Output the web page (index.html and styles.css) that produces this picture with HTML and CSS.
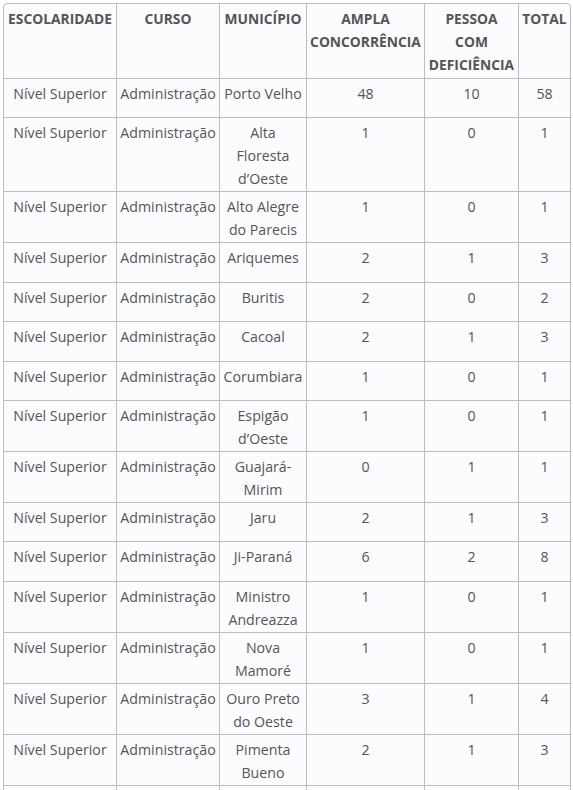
FILE: index.html
```html
<!DOCTYPE html>
<html lang="pt-BR">
<head>
<meta charset="utf-8">
<title>Vagas</title>
<link rel="stylesheet" href="styles.css">
</head>
<body>
<table class="vagas">
  <colgroup>
    <col class="c-esc"><col class="c-cur"><col class="c-mun"><col class="c-amp"><col class="c-pcd"><col class="c-tot">
  </colgroup>
  <thead>
    <tr><th>ESCOLARIDADE</th><th>CURSO</th><th>MUNICÍPIO</th><th>AMPLA CONCORRÊNCIA</th><th>PESSOA COM DEFICIÊNCIA</th><th>TOTAL</th></tr>
  </thead>
  <tbody>
    <tr><td>Nível Superior</td><td>Administração</td><td>Porto Velho</td><td>48</td><td>10</td><td>58</td></tr>
    <tr><td>Nível Superior</td><td>Administração</td><td>Alta Floresta d’Oeste</td><td>1</td><td>0</td><td>1</td></tr>
    <tr><td>Nível Superior</td><td>Administração</td><td>Alto Alegre do Parecis</td><td>1</td><td>0</td><td>1</td></tr>
    <tr><td>Nível Superior</td><td>Administração</td><td>Ariquemes</td><td>2</td><td>1</td><td>3</td></tr>
    <tr><td>Nível Superior</td><td>Administração</td><td>Buritis</td><td>2</td><td>0</td><td>2</td></tr>
    <tr><td>Nível Superior</td><td>Administração</td><td>Cacoal</td><td>2</td><td>1</td><td>3</td></tr>
    <tr><td>Nível Superior</td><td>Administração</td><td>Corumbiara</td><td>1</td><td>0</td><td>1</td></tr>
    <tr><td>Nível Superior</td><td>Administração</td><td>Espigão d’Oeste</td><td>1</td><td>0</td><td>1</td></tr>
    <tr><td>Nível Superior</td><td>Administração</td><td>Guajará-Mirim</td><td>0</td><td>1</td><td>1</td></tr>
    <tr><td>Nível Superior</td><td>Administração</td><td>Jaru</td><td>2</td><td>1</td><td>3</td></tr>
    <tr><td>Nível Superior</td><td>Administração</td><td>Ji-Paraná</td><td>6</td><td>2</td><td>8</td></tr>
    <tr><td>Nível Superior</td><td>Administração</td><td>Ministro Andreazza</td><td>1</td><td>0</td><td>1</td></tr>
    <tr><td>Nível Superior</td><td>Administração</td><td>Nova Mamoré</td><td>1</td><td>0</td><td>1</td></tr>
    <tr><td>Nível Superior</td><td>Administração</td><td>Ouro Preto do Oeste</td><td>3</td><td>1</td><td>4</td></tr>
    <tr><td>Nível Superior</td><td>Administração</td><td>Pimenta Bueno</td><td>2</td><td>1</td><td>3</td></tr>
    <tr><td>Nível Superior</td><td>Administração</td><td>Presidente Médici</td><td>1</td><td>0</td><td>1</td></tr>
  </tbody>
</table>
</body>
</html>
```
FILE: styles.css
```css
html, body {
  margin: 0;
  padding: 0;
  background: #ffffff;
}
body {
  padding: 3px;
  font-family: "Open Sans", "Liberation Sans", sans-serif;
  font-size: 14.2px;
  line-height: 23px;
  color: #555555;
}
.vagas {
  width: 567px;
  table-layout: fixed;
  border-collapse: separate;
  border-spacing: 0;
  border: 1px solid #bdbdbd;
  border-radius: 4px;
  background: #fcfcff;
}
.c-esc { width: 112px; }
.c-cur { width: 103px; }
.c-mun { width: 87px; }
.c-amp { width: 118px; }
.c-pcd { width: 94px; }
.c-tot { width: 52px; }
.vagas th,
.vagas td {
  text-align: center;
  vertical-align: top;
  padding: 3px 3px 1px;
  border-left: 1px solid #bdbdbd;
  border-top: 1px solid #bdbdbd;
}
.vagas th:first-child,
.vagas td:first-child {
  border-left: 0;
}
.vagas thead th {
  border-top: 0;
  font-size: 13.8px;
  font-weight: 700;
  color: #555555;
  padding: 3px 3px 2px;
}
.vagas tbody tr {
  height: 39.4px;
}
```
